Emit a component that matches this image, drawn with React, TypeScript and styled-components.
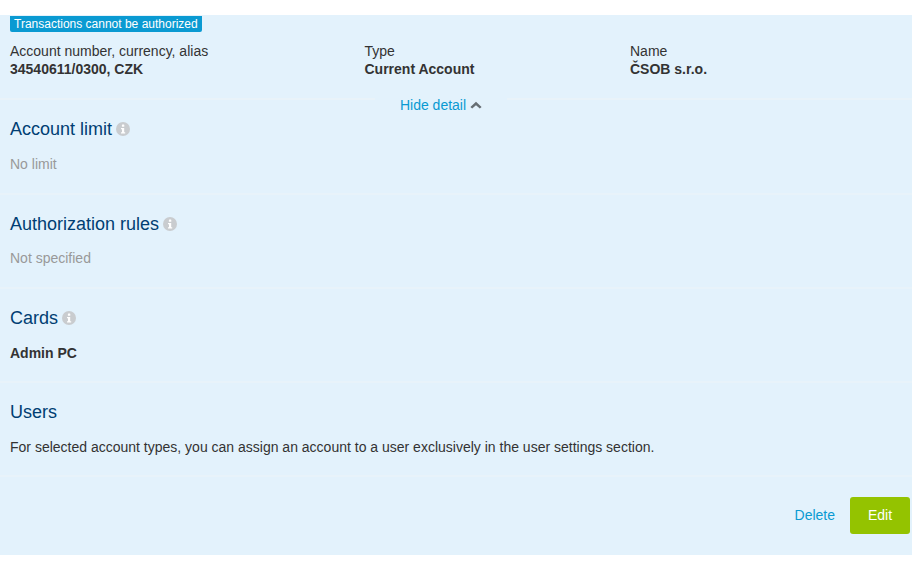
import React from "react";
import styled, { createGlobalStyle } from "styled-components";

const Global = createGlobalStyle`
  html, body { margin: 0; padding: 0; background: #fff; }
  body { font-family: "Liberation Sans", Arial, sans-serif; font-size: 14px; color: #333; }
`;
const Panel = styled.div`
  margin-top: 15px;
  height: 540px;
  background: #e3f2fc;
  display: flex;
  flex-direction: column;
`;
const Head = styled.div`
  height: 82px;
  padding: 1px 0 0 10px;
  border-bottom: 2px solid #e9f3f9;
  box-sizing: content-box;
  position: relative;
  flex: none;
`;
const Badge = styled.div`
  display: inline-block;
  vertical-align: top;
  background: #0a9ad2;
  color: #fff;
  font-size: 12px;
  line-height: 17px;
  height: 16px;
  padding: 0 4px;
  border-radius: 0 0 2px 2px;
`;
const Columns = styled.div`
  display: grid;
  grid-template-columns: 354.5px 265.5px 1fr;
  margin-top: 10px;
`;
const Label = styled.div`
  line-height: 18px;
`;
const Value = styled.div`
  line-height: 18px;
  font-weight: 700;
`;
const Toggle = styled.a`
  position: absolute;
  left: 375px;
  top: 83px;
  width: 132px;
  height: 14px;
  background: #e3f2fc;
  display: flex;
  align-items: center;
  justify-content: center;
  gap: 4px;
  color: #0a9ad2;
  line-height: 14px;
`;
const Section = styled.section<{ $height?: number }>`
  height: ${p => p.$height ?? 92}px;
  flex: none;
  padding: 0 10px;
  border-bottom: 2px solid #e8f3fa;
`;
const TitleRow = styled.div`
  display: flex;
  align-items: center;
  gap: 4px;
  height: 22px;
  padding-top: 18px;
`;
const Title = styled.h3`
  margin: 0;
  font-size: 18px;
  font-weight: 400;
  color: #003e73;
  line-height: 22px;
`;
const Body = styled.div<{ $muted?: boolean; $bold?: boolean; $gap?: number }>`
  margin-top: ${p => p.$gap ?? 15}px;
  line-height: 18px;
  color: ${p => (p.$muted ? "#999" : "#333")};
  font-weight: ${p => (p.$bold ? 700 : 400)};
`;
const Footer = styled.div`
  flex: 1;
  display: flex;
  align-items: center;
  justify-content: flex-end;
  gap: 15px;
  padding: 0 2px 2px 0;
`;
const Delete = styled.a`
  color: #0a9ad2;
`;
const Edit = styled.button`
  width: 60px;
  height: 37px;
  border: 0;
  border-radius: 3px;
  background: #94c300;
  color: #fff;
  font: 14px "Liberation Sans", Arial, sans-serif;
`;

const Info = () => (
  <svg width="14" height="14" viewBox="0 0 14 14" aria-hidden="true">
    <circle cx="7" cy="7" r="7" fill="#c9cccf" />
    <rect x="5.9" y="2.6" width="2.4" height="2.2" rx="0.4" fill="#fff" />
    <path d="M5 6h3.2v4.2h1v1.2H5v-1.2h1V7.2H5z" fill="#fff" />
  </svg>
);

const Chevron = () => (
  <svg width="12" height="8" viewBox="0 0 12 8" aria-hidden="true">
    <path d="M6 0.8 11.6 6 9.8 7.6 6 4.2 2.2 7.6 0.4 6z" fill="#666e73" />
  </svg>
);

export default function App() {
  return (
    <>
      <Global />
      <Panel>
        <Head>
          <Badge>Transactions cannot be authorized</Badge>
          <Columns>
            <div>
              <Label>Account number, currency, alias</Label>
              <Value>34540611/0300, CZK</Value>
            </div>
            <div>
              <Label>Type</Label>
              <Value>Current Account</Value>
            </div>
            <div>
              <Label>Name</Label>
              <Value>ČSOB s.r.o.</Value>
            </div>
          </Columns>
          <Toggle>
            Hide detail <Chevron />
          </Toggle>
        </Head>
        <Section $height={93}>
          <TitleRow>
            <Title>Account limit</Title>
            <Info />
          </TitleRow>
          <Body $muted>No limit</Body>
        </Section>
        <Section>
          <TitleRow>
            <Title>Authorization rules</Title>
            <Info />
          </TitleRow>
          <Body $muted $gap={14}>Not specified</Body>
        </Section>
        <Section>
          <TitleRow>
            <Title>Cards</Title>
            <Info />
          </TitleRow>
          <Body $bold>Admin PC</Body>
        </Section>
        <Section>
          <TitleRow>
            <Title>Users</Title>
          </TitleRow>
          <Body>For selected account types, you can assign an account to a user exclusively in the user settings section.</Body>
        </Section>
        <Footer>
          <Delete>Delete</Delete>
          <Edit>Edit</Edit>
        </Footer>
      </Panel>
    </>
  );
}
